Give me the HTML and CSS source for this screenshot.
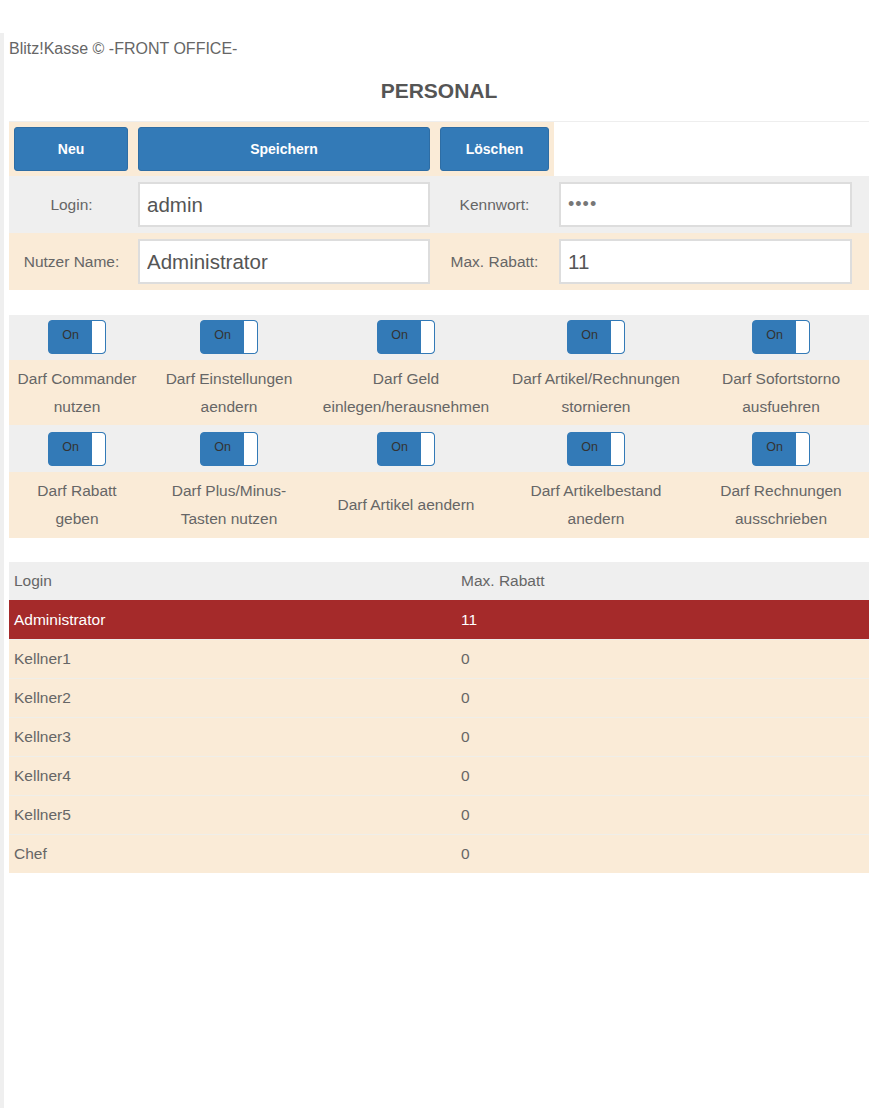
FILE: index.html
```html
<!doctype html><html lang="de"><head>
<meta http-equiv="Content-Type" content="text/html; charset=UTF-8" />
<meta name="viewport" content="width=device-width" />
<title>Personal - Blitz!Kasse</title>
<link rel="stylesheet" href="styles.css"></head><body>
<div class="page">
	<div class="brand">Blitz!Kasse &copy; -FRONT OFFICE-</div>
	<h3 class="title">PERSONAL</h3>
	<div class="tools">
		<div class="cell"><button class="btn">Neu</button></div>
		<div class="cell"><button class="btn">Speichern</button></div>
		<div class="cell"><button class="btn">Löschen</button></div>
	</div>
	<div class="form">
		<div class="frow grey">
			<label>Login:</label>
			<div class="field"><input value="admin" /></div>
			<label>Kennwort:</label>
			<div class="field"><input type="password" value="1234" /></div>
		</div>
		<div class="frow beige">
			<label>Nutzer Name:</label>
			<div class="field"><input value="Administrator" /></div>
			<label>Max. Rabatt:</label>
			<div class="field"><input value="11" /></div>
		</div>
	</div>
	<div class="rights">
		<div class="srow grey">
			<div><span class="switch"><span class="on">On</span><span class="knob"></span></span></div>
			<div><span class="switch"><span class="on">On</span><span class="knob"></span></span></div>
			<div><span class="switch"><span class="on">On</span><span class="knob"></span></span></div>
			<div><span class="switch"><span class="on">On</span><span class="knob"></span></span></div>
			<div><span class="switch"><span class="on">On</span><span class="knob"></span></span></div>
		</div>
		<div class="srow beige txt">
			<div>Darf Commander<br />nutzen</div>
			<div>Darf Einstellungen<br />aendern</div>
			<div>Darf Geld<br />einlegen/herausnehmen</div>
			<div>Darf Artikel/Rechnungen<br />stornieren</div>
			<div>Darf Sofortstorno<br />ausfuehren</div>
		</div>
		<div class="srow grey">
			<div><span class="switch"><span class="on">On</span><span class="knob"></span></span></div>
			<div><span class="switch"><span class="on">On</span><span class="knob"></span></span></div>
			<div><span class="switch"><span class="on">On</span><span class="knob"></span></span></div>
			<div><span class="switch"><span class="on">On</span><span class="knob"></span></span></div>
			<div><span class="switch"><span class="on">On</span><span class="knob"></span></span></div>
		</div>
		<div class="srow beige txt last">
			<div>Darf Rabatt<br />geben</div>
			<div>Darf Plus/Minus-<br />Tasten nutzen</div>
			<div>Darf Artikel aendern</div>
			<div>Darf Artikelbestand<br />anedern</div>
			<div>Darf Rechnungen<br />ausschrieben</div>
		</div>
	</div>
	<table class="list">
		<thead><tr><th>Login</th><th>Max. Rabatt</th></tr></thead>
		<tbody>
			<tr class="sel"><td>Administrator</td><td>11</td></tr>
			<tr><td>Kellner1</td><td>0</td></tr>
			<tr><td>Kellner2</td><td>0</td></tr>
			<tr><td>Kellner3</td><td>0</td></tr>
			<tr><td>Kellner4</td><td>0</td></tr>
			<tr><td>Kellner5</td><td>0</td></tr>
			<tr><td>Chef</td><td>0</td></tr>
		</tbody>
	</table>
</div>
</body></html>
```

FILE: styles.css
```css
body{ margin: 0; background: #fff; font: 15.5px/22px "Liberation Sans", Arial, sans-serif; color: #666 }
.page{ margin-top: 33px; border-left: 4px solid #efefef; padding: 0 5px; min-height: 1075px; box-sizing: border-box }
.grey{ background: #efefef }
.beige{ background: #faebd7 }
.brand{ font-size: 16px; padding-top: 5px; color: #666 }
.title{ margin: 19px 0 0; padding-bottom: 18px; border-bottom: 1px solid #eee; text-align: center; font-size: 21px; line-height: 24px; color: #555 }
.tools{ display: grid; grid-template-columns: 124px 302px 119px; width: 545px; background: #faebd7 }
.tools .cell{ padding: 5px }
.btn{ display: block; width: 100%; height: 44px; border: 1px solid #2e6da4; border-radius: 3px; background: #337ab7; color: #fff; font: bold 14px "Liberation Sans", Arial, sans-serif; cursor: pointer }
.frow{ display: grid; grid-template-columns: 125px 300px 121px 301px; height: 57px; align-items: center }
.frow label{ text-align: center }
.field{ padding: 0 4px }
.field input{ display: block; width: 100%; height: 45px; box-sizing: border-box; border: 2px solid #ddd; padding: 0 7px; font: 20.5px "Liberation Sans", Arial, sans-serif; color: #555; background: #fff; outline: none }
.field input[type=password]{ color: #777; font-size: 18px; letter-spacing: 1px }
.rights{ margin-top: 25px }
.srow{ display: grid; grid-template-columns: 136px 168px 186px 194px 1fr; align-items: center; text-align: center }
.srow.grey{ padding: 5px 0 6px }
.srow.grey + .srow.txt + .srow.grey{ padding: 7px 0 6px }
.srow.txt{ line-height: 28px; height: 65px }
.srow.last{ height: 66px }
.switch{ display: inline-flex; vertical-align: top; width: 58px; height: 34px; box-sizing: border-box; border: 1px solid #337ab7; border-radius: 4px; background: #337ab7; overflow: hidden }
.switch .on{ flex: 1; font-size: 12.5px; line-height: 28px; color: #333; text-align: center }
.switch .knob{ width: 13px; background: #fff; border-radius: 0 3px 3px 0 }
.list{ width: 100%; margin-top: 24px; border-collapse: collapse; font-size: 15.5px }
.list th{ background: #efefef; font-weight: normal; text-align: left; height: 38px; padding: 0 5px }
.list th:first-child{ width: 437px }
.list td{ background: #faebd7; height: 38px; padding: 0 5px; border-top: 1px solid #efeee9 }
.list tr.sel td{ background: #a52a2a; color: #fff; border-top-color: #a52a2a }
```
